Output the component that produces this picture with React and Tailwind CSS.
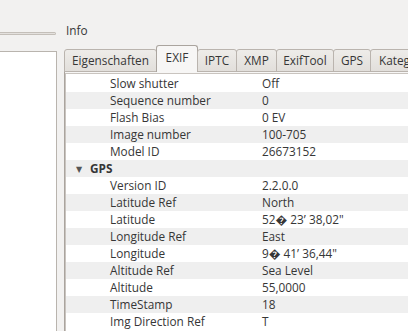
import React from 'react'

const tabs = [
  { label: 'Eigenschaften', w: 'w-[93px]' },
  { label: 'EXIF', w: 'w-[42px]', active: true },
  { label: 'IPTC', w: 'w-[40px]' },
  { label: 'XMP', w: 'w-[41px]' },
  { label: 'ExifTool', w: 'w-[58px]' },
  { label: 'GPS', w: 'w-[38px]' },
  { label: 'Kategorien', w: 'w-[80px]', clip: true },
]

const rows = [
  { key: 'Slow shutter', value: 'Off' },
  { key: 'Sequence number', value: '0' },
  { key: 'Flash Bias', value: '0 EV' },
  { key: 'Image number', value: '100-705' },
  { key: 'Model ID', value: '26673152' },
  { group: 'GPS' },
  { key: 'Version ID', value: '2.2.0.0' },
  { key: 'Latitude Ref', value: 'North' },
  { key: 'Latitude', value: '52\uFFFD 23\u2019 38,02"' },
  { key: 'Longitude Ref', value: 'East' },
  { key: 'Longitude', value: '9\uFFFD 41\u2019 36,44"' },
  { key: 'Altitude Ref', value: 'Sea Level' },
  { key: 'Altitude', value: '55,0000' },
  { key: 'TimeStamp', value: '18' },
  { key: 'Img Direction Ref', value: 'T' },
]

const App = () => {
  return (
    <div
      className="flex h-[331px] w-[408px] overflow-hidden bg-[#f2f1f0] text-[11.8px] text-[#363636]"
      style={{ fontFamily: '"Open Sans", "DejaVu Sans", sans-serif' }}
    >
      {/* left panel */}
      <div className="flex w-[57px] shrink-0 flex-col">
        <div className="mt-[32px] h-[3px] w-[56px] rounded-r-full border-y border-r border-[#c4bfb9] bg-[#e4e1de]" />
        <div className="mt-[16px] flex-1 border-t border-r border-[#b9b4ae] bg-white" />
      </div>

      {/* info area */}
      <div className="ml-[7px] flex min-w-0 flex-1 flex-col">
        <div className="ml-[2px] mt-[22px] h-[23px] leading-[16px]">Info</div>

        <div className="relative z-10 -mb-px flex h-[27px] items-end">
          {tabs.map((tab) =>
            tab.active ? (
              <div
                key={tab.label}
                className={`${tab.w} -ml-px flex h-[27px] shrink-0 items-center justify-center rounded-t-[3px] border border-b-0 border-[#aaa49e] bg-[#f7f6f5] pb-[2px]`}
              >
                {tab.label}
              </div>
            ) : (
              <div
                key={tab.label}
                className={`${tab.w} -ml-px flex h-[23px] shrink-0 items-center rounded-t-[3px] border border-[#bab4ae] bg-gradient-to-b from-[#eeece9] to-[#e2dfdb] first:ml-0 ${
                  tab.clip ? 'justify-start pl-[8px]' : 'justify-center'
                }`}
              >
                {tab.label}
              </div>
            )
          )}
        </div>

        <div className="flex-1 border-t border-l border-[#aaa49e] bg-[#f7f6f5] pt-px">
          <div className="h-full border-t border-l border-[#c9c4bf] bg-white pt-px">
            {rows.map((row, i) => (
              <div
                key={row.key || row.group}
                className={`flex h-[17px] leading-[17px] ${i % 2 === 1 ? 'bg-[#efefef]' : 'bg-white'}`}
              >
                {row.group ? (
                  <div className="flex items-center pl-[10px]">
                    <span className="w-[14px] text-[8px] leading-[17px] text-[#555]">▼</span>
                    <span className="font-bold">{row.group}</span>
                  </div>
                ) : (
                  <>
                    <div className="w-[196px] shrink-0 whitespace-nowrap pl-[44px]">{row.key}</div>
                    <div className="whitespace-nowrap">{row.value}</div>
                  </>
                )}
              </div>
            ))}
          </div>
        </div>
      </div>
    </div>
  )
}

export default App
